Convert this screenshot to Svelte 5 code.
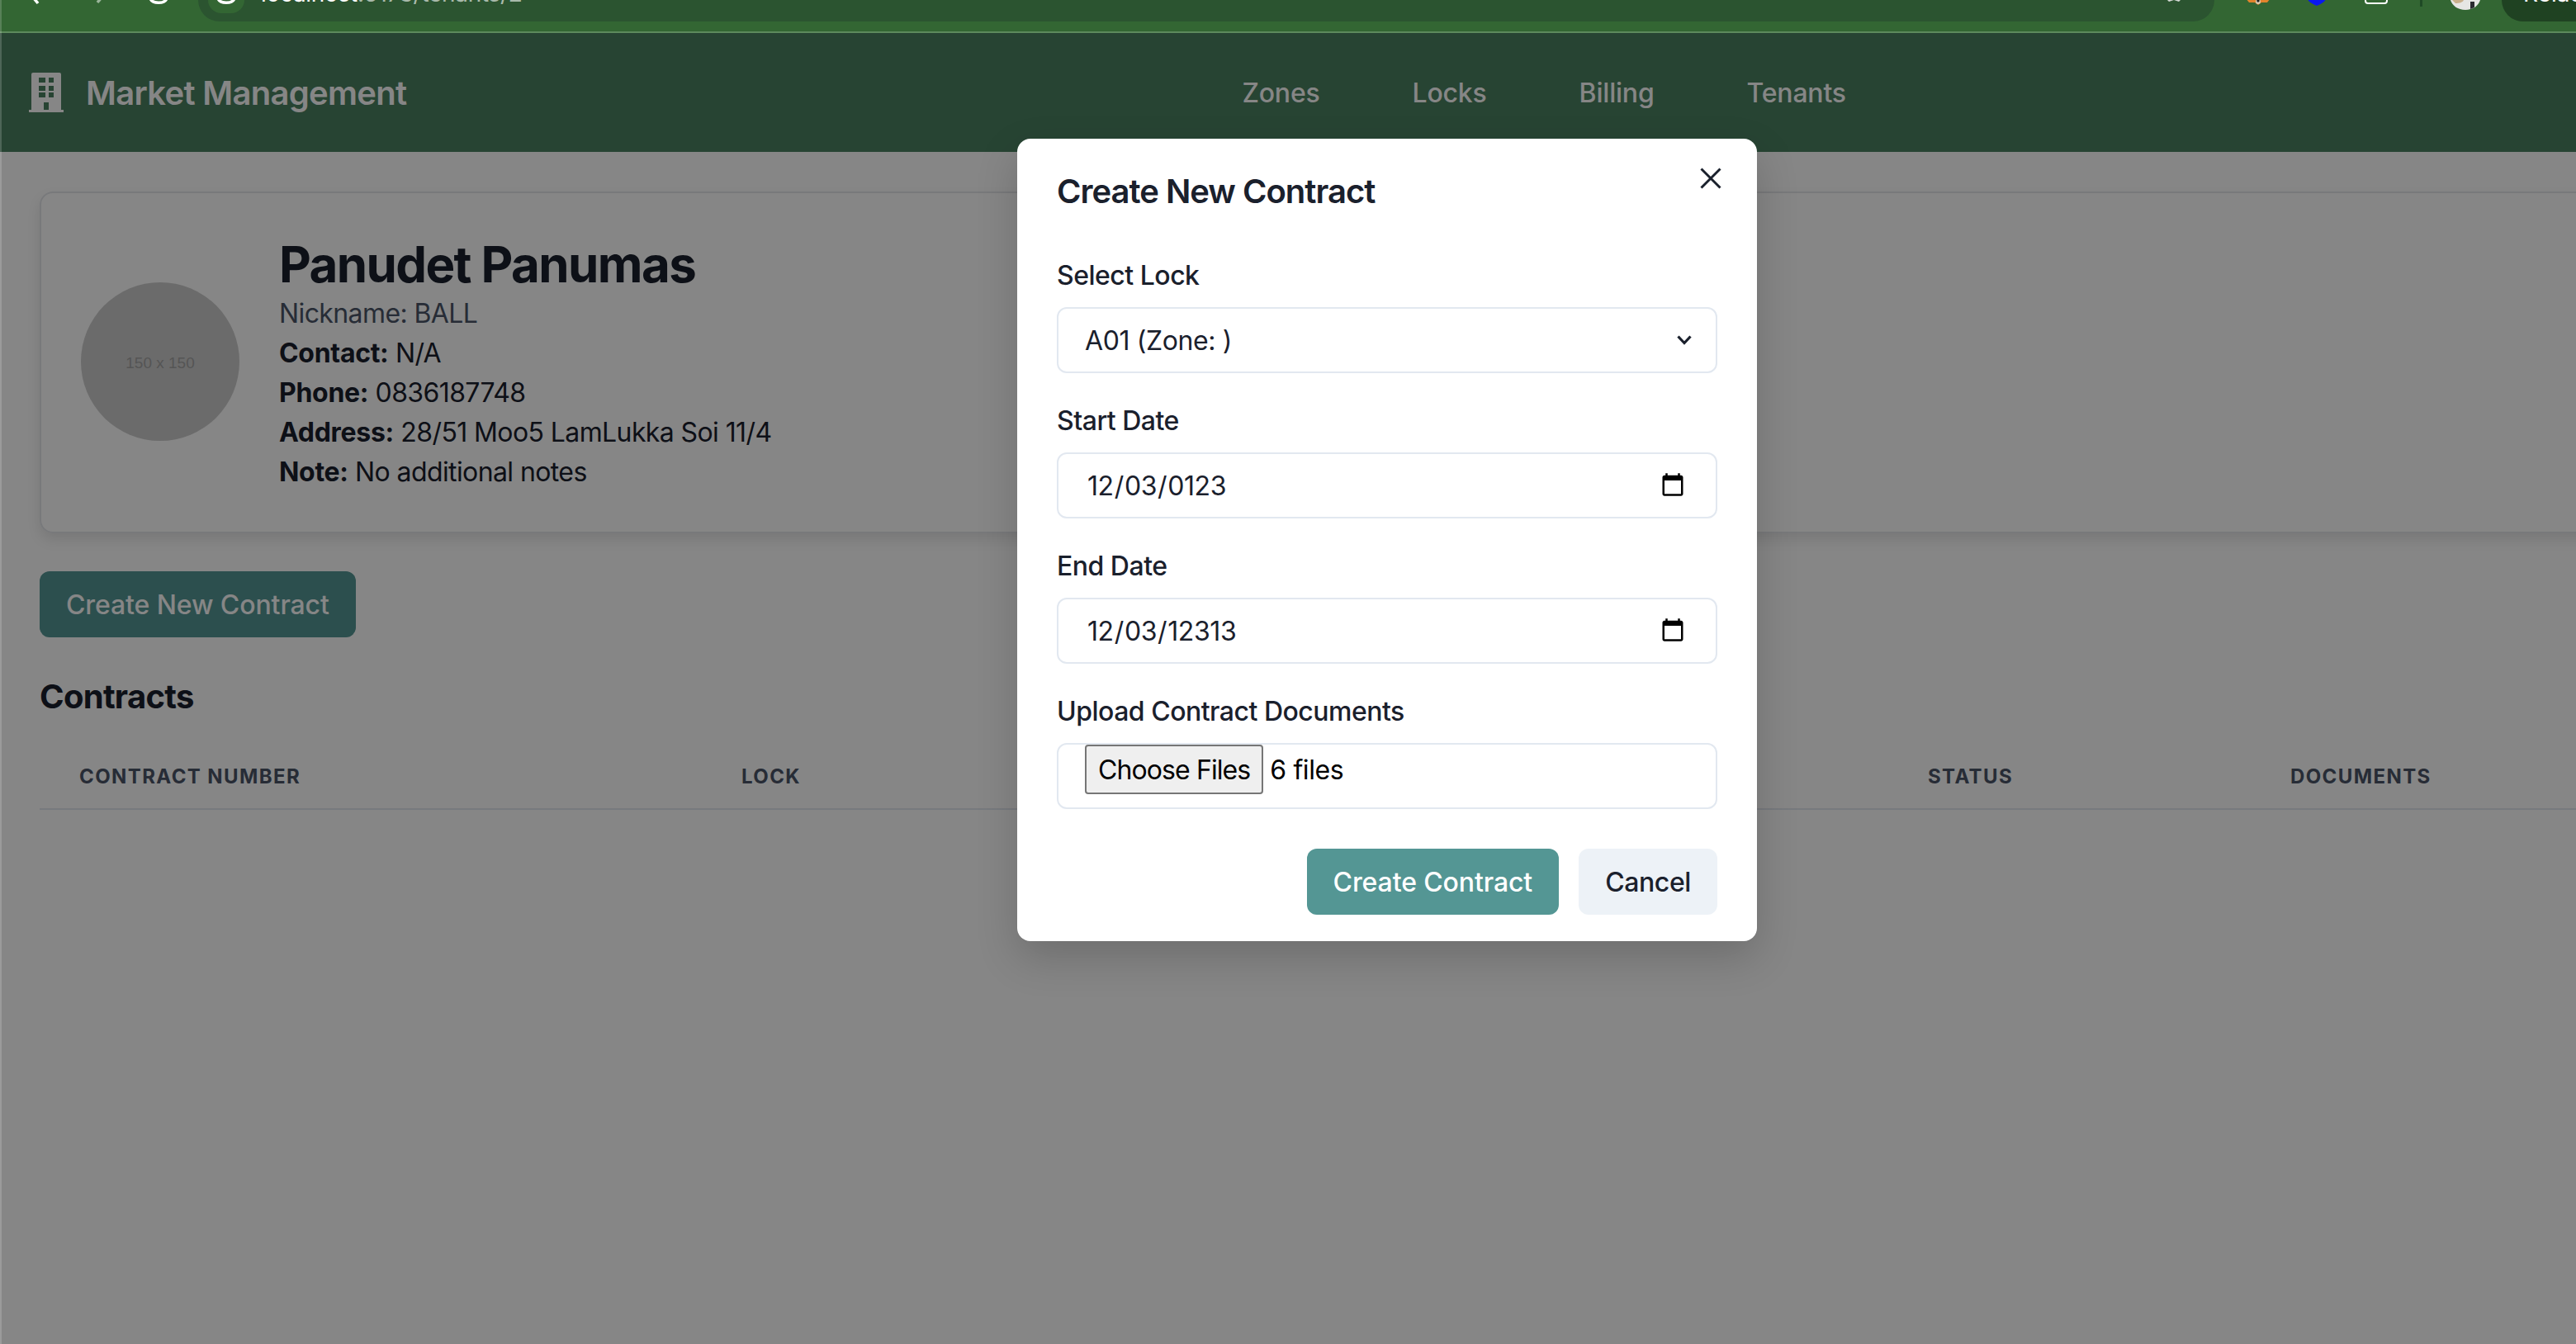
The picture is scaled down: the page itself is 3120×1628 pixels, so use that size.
<script lang="ts">
	const details = [
		{ label: 'Contact:', value: 'N/A' },
		{ label: 'Phone:', value: '0836187748' },
		{ label: 'Address:', value: '28/51 Moo5 LamLukka Soi 11/4' },
		{ label: 'Note:', value: 'No additional notes' }
	];

	const links = ['Zones', 'Locks', 'Billing', 'Tenants'];
	const columns = ['Contract Number', 'Lock', '', 'Status', 'Documents'];
</script>

<div class="window">
	<div class="toolbar">
		<svg class="tb-back" width="14" height="8" viewBox="0 0 14 8"><path d="M1 0 L6 6" /></svg>
		<svg class="tb-fwd" width="12" height="8" viewBox="0 0 12 8"><path d="M10 0 L5 6" /></svg>
		<svg class="tb-reload" width="24" height="8" viewBox="0 0 24 8"><path d="M2 0 C4 7 20 7 22 0" /></svg>
		<div class="omnibox">
			<div class="site-chip">
				<svg width="24" height="8" viewBox="0 0 24 8"><path d="M2 0 C4 7 20 7 22 0" /></svg>
			</div>
			<div class="url"><span class="host">localhost</span>:5173/tenants/2</div>
			<svg class="star" width="22" height="8" viewBox="0 0 22 8"><path d="M0 0 H22 L17 5 L11 3 L5 5 Z" /></svg>
		</div>
		<svg class="ext-fox" width="30" height="9" viewBox="0 0 30 9">
			<path d="M0 0 H30 L26 5 L19 5 L15 8 L11 5 L4 5 Z" fill="#e2832c" />
			<circle cx="15" cy="4" r="3" fill="#d9c9b4" />
			<circle cx="15" cy="3" r="1.6" fill="#1c1c1c" />
		</svg>
		<svg class="ext-shield" width="22" height="8" viewBox="0 0 22 8"><path d="M0 0 H22 C21 3 16 6 11 8 C6 6 1 3 0 0 Z" fill="#0a18f0" /></svg>
		<div class="ext-box"></div>
		<div class="divider"></div>
		<svg class="profile" width="36" height="12" viewBox="0 0 36 12">
			<path d="M0 0 H36 C34 7 27 12 18 12 C9 12 2 7 0 0 Z" fill="#e6e6e4" />
			<path d="M2 0 H16 C15 3 10 4 6 4 Z" fill="#c9b08c" />
			<path d="M24 2 H29 V9 L24 11 Z" fill="#2a2a30" />
		</svg>
		<div class="relaunch"><span>Relaunch</span></div>
	</div>

	<div class="viewport">
		<div class="page">
			<header class="nav">
				<svg class="logo" width="42" height="48" viewBox="35 88 42 48">
					<path
						fill-rule="evenodd"
						d="M40 88 H72 Q74 88 74 90 V133 H77 V136 H35 V133 H38 V90 Q38 88 40 88 Z M47 94 V100 H55 V94 Z M59 94 V100 H65 V94 Z M47 104 V110 H55 V104 Z M59 104 V110 H65 V104 Z M47 112 V118 H55 V112 Z M59 112 V118 H65 V112 Z M53 124 V133 H59 V124 Z"
					/>
				</svg>
				<span class="brand">Market Management</span>
				<nav class="links">
					{#each links as link}
						<a href="#{link}">{link}</a>
					{/each}
				</nav>
			</header>

			<main class="content">
				<section class="tenant-card">
					<div class="avatar">150 x 150</div>
					<div class="info">
						<h1>Panudet Panumas</h1>
						<p class="nickname">Nickname: BALL</p>
						{#each details as row}
							<p><strong>{row.label}</strong> {row.value}</p>
						{/each}
					</div>
				</section>

				<button class="primary new-contract">Create New Contract</button>

				<h2>Contracts</h2>
				<div class="table-head">
					{#each columns as col}
						<div class="th">{col}</div>
					{/each}
				</div>
			</main>
		</div>

		<div class="backdrop"></div>

		<div class="modal">
			<button class="close" aria-label="Close">
				<svg width="26" height="26" viewBox="0 0 26 26"><path d="M1.5 1.5 L24.5 24.5 M24.5 1.5 L1.5 24.5" /></svg>
			</button>
			<h3>Create New Contract</h3>
			<form>
				<label for="lock">Select Lock</label>
				<div class="select-wrap">
					<select id="lock">
						<option>A01 (Zone: )</option>
					</select>
					<svg class="chevron" width="20" height="12" viewBox="0 0 20 12"><path d="M2.5 1.5 L10 9.5 L17.5 1.5" /></svg>
				</div>

				<label for="start">Start Date</label>
				<input id="start" type="date" value="0123-12-03" />

				<label for="end">End Date</label>
				<input id="end" type="date" value="12313-12-03" />

				<label for="docs">Upload Contract Documents</label>
				<div class="file-field">
					<button id="docs" type="button" class="choose">Choose Files</button>
					<span>6 files</span>
				</div>

				<div class="actions">
					<button type="button" class="primary">Create Contract</button>
					<button type="button" class="cancel">Cancel</button>
				</div>
			</form>
		</div>
	</div>
</div>

<style>
	:global(body) {
		margin: 0;
		font-family: Inter, 'Noto Sans', sans-serif;
		color: #1a202c;
		background: #fff;
	}

	.window {
		position: relative;
		width: 3120px;
		height: 1628px;
		overflow: hidden;
	}

	/* hairline of the browser window on the left */
	.window::after {
		content: '';
		position: absolute;
		inset: 0 auto 0 0;
		width: 2px;
		background: rgba(255, 255, 255, 0.18);
	}

	.toolbar {
		display: flex;
		align-items: flex-start;
		height: 38px;
		background: #336633;
		border-bottom: 2px solid #5d8a5d;
		overflow: hidden;
	}

	.toolbar svg path {
		fill: none;
		stroke: #fff;
		stroke-width: 3.5;
	}

	.toolbar .tb-fwd path {
		stroke: #9bb59b;
	}

	.tb-back {
		margin: -2px 0 0 40px;
	}

	.tb-fwd {
		margin: -3px 0 0 59px;
	}

	.tb-reload {
		margin: -2px 0 0 55px;
	}

	.omnibox {
		display: flex;
		align-items: flex-start;
		flex: none;
		width: 2442px;
		height: 26px;
		margin-left: 36px;
		background: #2b5430;
		border-radius: 0 0 28px 28px;
	}

	.site-chip {
		display: flex;
		justify-content: center;
		width: 44px;
		height: 16px;
		margin-left: 12px;
		background: #336633;
		border-radius: 0 0 22px 22px;
	}

	.site-chip svg {
		margin-top: -2px;
	}

	.url {
		margin: -25px 0 0 20px;
		font-size: 28px;
		line-height: 34px;
		letter-spacing: -0.3px;
		color: rgba(255, 255, 255, 0.62);
		white-space: nowrap;
	}

	.host {
		color: #fff;
	}

	.toolbar .star {
		margin: -3px 38px 0 auto;
	}

	.toolbar .star path {
		fill: #d4d8d4;
		stroke: none;
	}

	.toolbar .ext-fox {
		margin: -2px 0 0 38px;
	}

	.toolbar .ext-fox path,
	.toolbar .ext-shield path,
	.toolbar .profile path {
		stroke: none;
	}

	.toolbar .ext-fox path {
		fill: #e2832c;
	}

	.toolbar .ext-shield {
		margin: -1px 0 0 45px;
	}

	.toolbar .ext-shield path {
		fill: #0a18f0;
	}

	.ext-box {
		width: 28px;
		height: 14px;
		margin: -9px 0 0 47px;
		box-sizing: border-box;
		border: 2px solid #fff;
		border-radius: 4px;
	}

	.divider {
		width: 3px;
		height: 8px;
		margin-left: 39px;
		background: #1f4a26;
	}

	.toolbar .profile {
		margin-left: 34px;
	}

	.toolbar .profile path:nth-child(1) {
		fill: #e6e6e4;
	}

	.toolbar .profile path:nth-child(2) {
		fill: #c9b08c;
	}

	.toolbar .profile path:nth-child(3) {
		fill: #2a2a30;
	}

	.relaunch {
		flex: 1;
		height: 26px;
		margin-left: 26px;
		padding-left: 26px;
		background: #1f4222;
		border-radius: 0 0 0 28px;
		overflow: hidden;
	}

	.relaunch span {
		display: block;
		margin-top: -25px;
		font-size: 28px;
		line-height: 34px;
		color: #fff;
	}

	.viewport {
		position: relative;
		height: 1588px;
		overflow: hidden;
	}

	.page {
		width: 3360px;
		height: 100%;
	}

	.nav {
		display: flex;
		align-items: center;
		height: 144px;
		padding-left: 35px;
		background: #4a8261;
		color: #fff;
	}

	.logo {
		fill: #fff;
	}

	.brand {
		margin-left: 27px;
		font-size: 40px;
		font-weight: 600;
		letter-spacing: -0.7px;
	}

	.links {
		display: flex;
		gap: 112px;
		margin-left: 1012px;
	}

	.links a {
		font-size: 32px;
		font-weight: 500;
		letter-spacing: -0.2px;
		color: #fff;
		text-decoration: none;
	}

	.content {
		padding: 48px;
	}

	.tenant-card {
		display: flex;
		align-items: center;
		gap: 48px;
		padding: 50px 48px 48px;
		border: 2px solid #e5e7eb;
		border-radius: 16px;
		box-shadow: 0 8px 16px rgba(0, 0, 0, 0.1);
	}

	.avatar {
		display: flex;
		align-items: center;
		justify-content: center;
		flex: none;
		box-sizing: border-box;
		width: 192px;
		height: 192px;
		margin-top: -4px;
		padding-top: 4px;
		border-radius: 50%;
		background: #cccccc;
		color: #a2a2a2;
		font-family: 'Liberation Sans', sans-serif;
		font-size: 19px;
	}

	h1 {
		margin: 0;
		font-size: 60px;
		line-height: 72px;
		font-weight: 700;
		letter-spacing: -1.6px;
	}

	.info p {
		margin: 0;
		font-size: 32px;
		line-height: 48px;
		letter-spacing: -0.6px;
	}

	.info strong {
		font-weight: 700;
		letter-spacing: -0.3px;
	}

	.info .nickname {
		color: #4a5568;
	}

	button {
		font-family: inherit;
	}

	.primary {
		height: 80px;
		padding: 0 32px;
		border: 0;
		border-radius: 12px;
		background: #549694;
		color: #fff;
		font-size: 32px;
		font-weight: 500;
		letter-spacing: -0.1px;
	}

	.new-contract {
		display: block;
		margin-top: 46px;
	}

	h2 {
		margin: 40px 0 23px;
		font-size: 40px;
		line-height: 64px;
		font-weight: 700;
		letter-spacing: -0.7px;
	}

	.table-head {
		display: grid;
		grid-template-columns: 802px 600px 837px 439px 1fr;
		border-bottom: 2px solid #e2e8f0;
	}

	.th {
		padding: 26px 48px 22px;
		font-size: 24px;
		line-height: 32px;
		font-weight: 700;
		letter-spacing: 1.4px;
		text-transform: uppercase;
		color: #4a5568;
	}

	.backdrop {
		position: absolute;
		inset: 0;
		background: rgba(0, 0, 0, 0.475);
	}

	.modal {
		position: absolute;
		top: 128px;
		left: 1232px;
		box-sizing: border-box;
		width: 896px;
		height: 972px;
		padding: 34px 48px;
		background: #fff;
		border-radius: 16px;
		box-shadow: 0 20px 50px rgba(0, 0, 0, 0.18);
	}

	.close {
		position: absolute;
		top: 35px;
		right: 43px;
		padding: 0;
		border: 0;
		background: none;
		line-height: 0;
	}

	.close path {
		fill: none;
		stroke: #1a202c;
		stroke-width: 3;
	}

	h3 {
		margin: 0 0 48px;
		font-size: 40px;
		line-height: 60px;
		font-weight: 600;
		letter-spacing: -1px;
	}

	label {
		display: block;
		margin-bottom: 14px;
		font-size: 32px;
		line-height: 48px;
		font-weight: 500;
		letter-spacing: -0.5px;
	}

	select,
	input,
	.file-field {
		display: block;
		box-sizing: border-box;
		width: 100%;
		height: 80px;
		margin-bottom: 34px;
		padding: 0 32px;
		border: 2px solid #e2e8f0;
		border-radius: 12px;
		background: #fff;
		font-family: inherit;
		font-size: 32px;
		letter-spacing: -0.4px;
		color: #1a202c;
	}

	input {
		padding: 0 34px;
	}

	select {
		appearance: none;
		margin-bottom: 0;
	}

	.select-wrap {
		position: relative;
		margin-bottom: 34px;
	}

	.chevron {
		position: absolute;
		top: 34px;
		right: 30px;
	}

	.chevron path {
		fill: none;
		stroke: #1a202c;
		stroke-width: 3.2;
	}

	.file-field {
		display: flex;
		align-items: flex-start;
		gap: 8px;
		margin-bottom: 48px;
		line-height: 62px;
		color: #000;
	}

	.choose {
		height: 60px;
		padding: 0 14px;
		border: 2px solid #767676;
		border-radius: 4px;
		background: #efefef;
		color: #000;
		font-size: 32px;
		letter-spacing: -0.9px;
	}

	.actions {
		display: flex;
		justify-content: flex-end;
		gap: 24px;
	}

	.cancel {
		height: 80px;
		padding: 0 32px;
		border: 0;
		border-radius: 12px;
		background: #edf2f7;
		color: #1a202c;
		font-size: 32px;
		font-weight: 500;
		letter-spacing: -0.4px;
	}
</style>
